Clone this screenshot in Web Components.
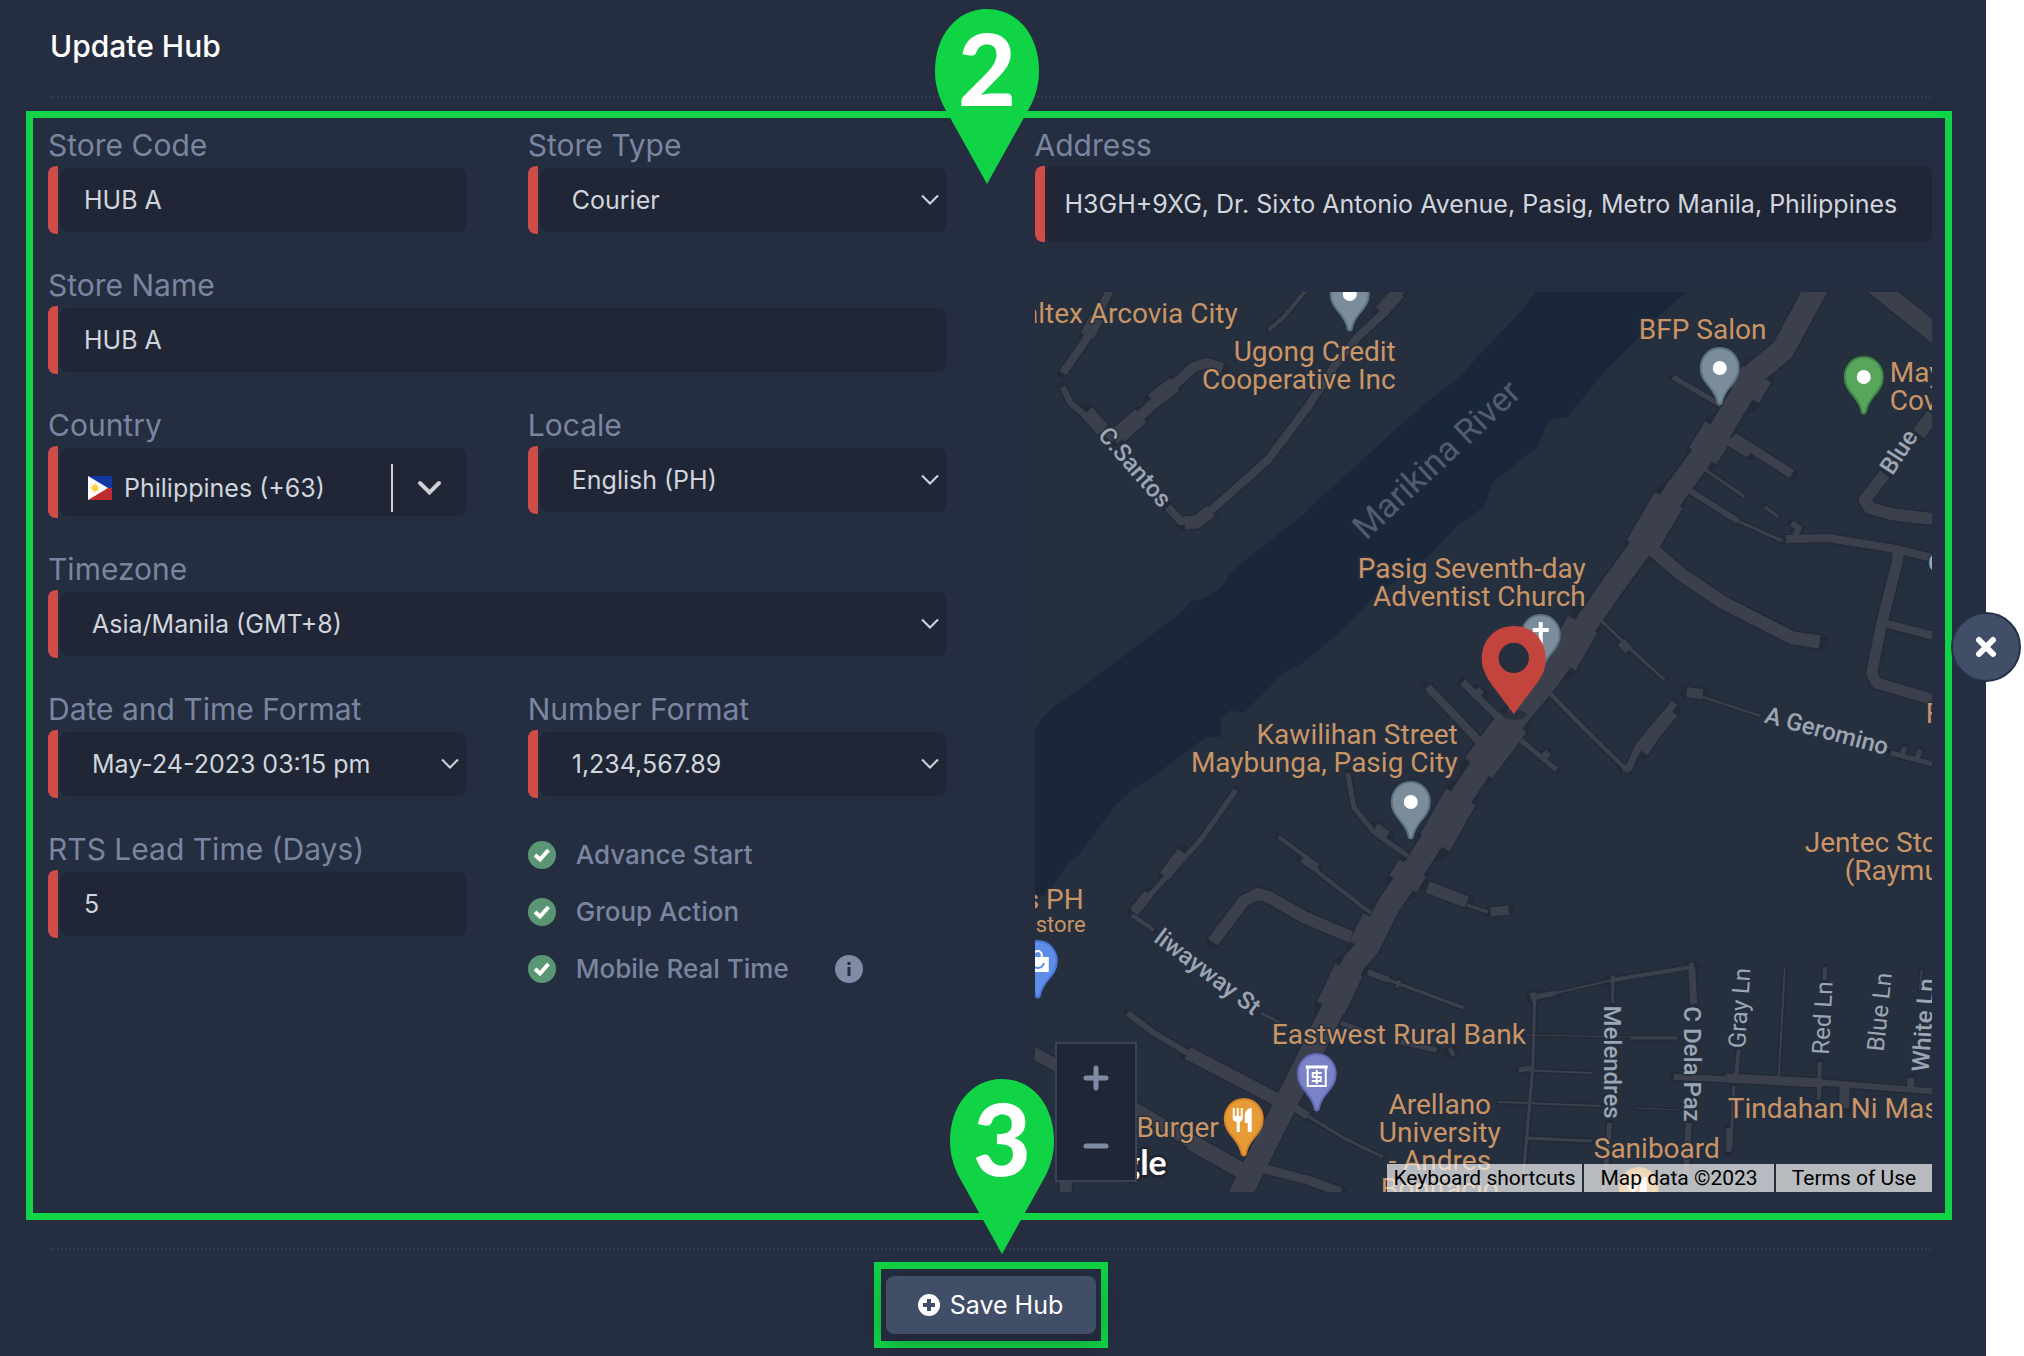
<!DOCTYPE html>
<html lang="en">
<head>
<meta charset="utf-8">
<title>Update Hub</title>
<style>
    :root {
        --panel: #252d40;
        --field: #202635;
        --label: #7a86a0;
        --value: #d0d5de;
        --required: #d04c48;
        --button: #414e67;
        --mark: #10d345;
    }

    body {
        margin: 0;
        background: #fff;
        font-family: Inter, "Open Sans", sans-serif;
        font-size: 25px;
        color: var(--value);
    }
</style>
</head>
<body>
<hub-panel heading="Update Hub">
    <hub-form slot="body">
        <form-field label="Store Code" value="HUB A"></form-field>
        <form-field label="Store Type" kind="select" value="Courier"></form-field>
        <form-field label="Store Name" value="HUB A" wide></form-field>
        <country-field label="Country" value="Philippines (+63)"></country-field>
        <form-field label="Locale" kind="select" value="English (PH)"></form-field>
        <form-field label="Timezone" kind="select" value="Asia/Manila (GMT+8)" wide></form-field>
        <form-field label="Date and Time Format" kind="select" value="May-24-2023 03:15 pm"></form-field>
        <form-field label="Number Format" kind="select" value="1,234,567.89"></form-field>
        <form-field label="RTS Lead Time (Days)" value="5"></form-field>
        <check-list>
            <check-item label="Advance Start"></check-item>
            <check-item label="Group Action"></check-item>
            <check-item label="Mobile Real Time" info></check-item>
        </check-list>
        <form-field slot="location" label="Address" tall
            value="H3GH+9XG, Dr. Sixto Antonio Avenue, Pasig, Metro Manila, Philippines"></form-field>
        <hub-map slot="location"></hub-map>
    </hub-form>
    <save-button slot="actions">Save Hub</save-button>
    <step-pin slot="steps" class="fields">2</step-pin>
    <step-pin slot="steps" class="save">3</step-pin>
</hub-panel>

<script>
class BaseElement extends HTMLElement {
    connectedCallback() {
        if (this.shadowRoot) return;
        this.attachShadow({ mode: 'open' });
        this.shadowRoot.innerHTML = `<style>* { box-sizing: border-box; }</style>` + this.render();
    }

    attr(name) {
        return this.getAttribute(name) || '';
    }
}

class HubPanel extends BaseElement {
    render() {
        return `
            <style>
                :host {
                    display: block;
                    position: relative;
                    box-sizing: border-box;
                    min-height: 100vh;
                    margin-right: 38px;
                    background: var(--panel);
                }
                header {
                    margin: 0 55px 0 50px;
                    padding: 26px 0 30px;
                    border-bottom: 2px dotted #343c50;
                }
                h1 {
                    margin: 0;
                    font-size: 30px;
                    line-height: 40px;
                    font-weight: 500;
                    color: #fff;
                }
                main {
                    margin: 13px 34px 28px 26px;
                    padding: 8px 13px 21px 15px;
                    border: 7px solid var(--mark);
                }
                footer {
                    display: flex;
                    justify-content: center;
                    margin: 0 55px 0 50px;
                    padding: 12px 0 8px;
                    border-top: 2px dotted #343c50;
                }
                .close {
                    position: absolute;
                    top: 612px;
                    right: -35px;
                    display: grid;
                    place-items: center;
                    width: 70px;
                    height: 70px;
                    padding: 0;
                    border: 2px solid #263149;
                    border-radius: 50%;
                    background: var(--button);
                }
                ::slotted(step-pin) { position: absolute; }
                ::slotted(.fields) { top: 9px; left: calc(50% - 58px); }
                ::slotted(.save) { bottom: 102px; left: calc(50% - 43px); }
            </style>
            <header><h1>${this.attr('heading')}</h1></header>
            <main><slot name="body"></slot></main>
            <footer><slot name="actions"></slot></footer>
            <button class="close" type="button" aria-label="Close">
                <svg width="22" height="22" viewBox="0 0 22 22" stroke="#fff" stroke-width="6" stroke-linecap="round">
                    <path d="M4 4 18 18M18 4 4 18"/>
                </svg>
            </button>
            <slot name="steps"></slot>
        `;
    }
}

class HubForm extends BaseElement {
    render() {
        return `
            <style>
                :host {
                    display: grid;
                    grid-template-columns: minmax(0, 1fr) minmax(0, 1fr);
                    column-gap: 89px;
                    align-items: start;
                }
                .fields {
                    display: grid;
                    grid-template-columns: minmax(0, 1fr) minmax(0, 1fr);
                    gap: 32px 62px;
                    align-items: start;
                }
                .location {
                    display: flex;
                    flex-direction: column;
                    gap: 50px;
                }
                ::slotted([wide]) { grid-column: 1 / -1; }
            </style>
            <div class="fields"><slot></slot></div>
            <div class="location"><slot name="location"></slot></div>
        `;
    }
}

const FIELD_STYLE = `
    :host { display: block; }
    label {
        display: block;
        padding-bottom: 2px;
        font-size: 30px;
        line-height: 38px;
        color: var(--label);
        white-space: nowrap;
    }
    .box {
        position: relative;
        display: flex;
        height: 68px;
        padding: 2px 0 2px 12px;
    }
    .box::before {
        content: "";
        position: absolute;
        inset: 0 auto 0 0;
        width: 10px;
        border-radius: 8px 0 0 8px;
        background: var(--required);
    }
    input, select {
        flex: 1;
        min-width: 0;
        margin: 0;
        padding: 0 24px;
        border: 0;
        border-radius: 8px;
        background: var(--field);
        color: var(--value);
        font: inherit;
    }
    select {
        appearance: none;
        padding: 0 32px;
    }
    .arrow {
        position: absolute;
        top: 28px;
        right: 7px;
        pointer-events: none;
    }
`;

class FormField extends BaseElement {
    render() {
        const value = this.attr('value');
        const control = this.attr('kind') === 'select'
            ? `<select id="control"><option>${value}</option></select>
               <svg class="arrow" width="18" height="12" viewBox="0 0 18 12" fill="none" stroke="#d0d5de" stroke-width="2">
                   <path d="M1 1.500 9 9.500 17 1.500"/>
               </svg>`
            : `<input id="control" type="text" value="${value}">`;

        return `
            <style>
                ${FIELD_STYLE}
                :host([tall]) .box { height: 76px; padding: 0 0 0 10px; }
                :host([tall]) input { padding: 0 20px; }
            </style>
            <label for="control">${this.attr('label')}</label>
            <div class="box">${control}</div>
        `;
    }
}

class CountryField extends BaseElement {
    render() {
        return `
            <style>
                ${FIELD_STYLE}
                .box { height: 72px; }
                .picker {
                    flex: 1;
                    display: flex;
                    align-items: center;
                    min-width: 0;
                    padding: 12px 24px 0 28px;
                    border-radius: 8px;
                    background: var(--field);
                }
                select { padding: 0 12px; background: none; }
                .rule {
                    align-self: stretch;
                    width: 2px;
                    margin: 4px 24px 4px 0;
                    background: #d0d0d0;
                }
            </style>
            <label for="control">${this.attr('label')}</label>
            <div class="box">
                <div class="picker">
                    <svg width="24" height="24" viewBox="0 0 24 24">
                        <path fill="#1237a4" d="M0 0h24v12H0z"/>
                        <path fill="#c02b30" d="M0 12h24v12H0z"/>
                        <path fill="#fff" d="M0 0 20 12 0 24z"/>
                        <circle cx="7" cy="12" r="3" fill="#fbd143"/>
                        <path stroke="#fbd143" d="M7 7v10M2 12h10M3.500 8.500l7 7M10.500 8.500l-7 7"/>
                    </svg>
                    <select id="control"><option>${this.attr('value')}</option></select>
                    <span class="rule"></span>
                    <svg width="25" height="16" viewBox="0 0 25 16" fill="none" stroke="#d0d0d0" stroke-width="4" stroke-linecap="round">
                        <path d="M3 3 12.500 12.500 22 3"/>
                    </svg>
                </div>
            </div>
        `;
    }
}

class CheckList extends BaseElement {
    render() {
        return `
            <style>
                :host {
                    display: flex;
                    flex-direction: column;
                    gap: 17px;
                    padding-top: 5px;
                }
            </style>
            <slot></slot>
        `;
    }
}

class CheckItem extends BaseElement {
    render() {
        const info = this.hasAttribute('info') ? `
            <svg class="info" width="28" height="28" viewBox="0 0 28 28" role="img" aria-label="Info">
                <circle cx="14" cy="14" r="14" fill="#808ca5"/>
                <path fill="#252d40" d="M12.500 7h3v3h-3zM12.500 12h3v9h-3z"/>
            </svg>` : '';

        return `
            <style>
                :host { display: flex; align-items: center; gap: 46px; }
                label {
                    position: relative;
                    display: flex;
                    align-items: center;
                    gap: 20px;
                    font-size: 26px;
                    line-height: 40px;
                    color: var(--label);
                    font-weight: 500;
                }
                input {
                    appearance: none;
                    width: 28px;
                    height: 28px;
                    margin: 0;
                    border-radius: 50%;
                    background: #5a9673;
                }
                .tick {
                    position: absolute;
                    left: 5px;
                    pointer-events: none;
                }
            </style>
            <label>
                <input type="checkbox" checked>
                <svg class="tick" width="18" height="18" viewBox="0 0 18 18" fill="none" stroke="#fff" stroke-width="4">
                    <path d="M2 9 7 13.500 15.500 4"/>
                </svg>
                <span>${this.attr('label')}</span>
            </label>
            ${info}
        `;
    }
}

class SaveButton extends BaseElement {
    render() {
        return `
            <style>
                :host {
                    display: block;
                    padding: 7px 5px;
                    border: 7px solid var(--mark);
                }
                button {
                    display: flex;
                    align-items: center;
                    justify-content: center;
                    gap: 10px;
                    width: 210px;
                    height: 58px;
                    border: 0;
                    border-radius: 8px;
                    background: var(--button);
                    box-shadow: 0 6px 24px rgba(20, 24, 36, .4);
                    color: #fff;
                    font: inherit;
                }
            </style>
            <button type="button">
                <svg width="22" height="22" viewBox="0 0 22 22">
                    <circle cx="11" cy="11" r="11" fill="#fff"/>
                    <path stroke="#414e67" stroke-width="4" d="M11 5v12M5 11h12"/>
                </svg>
                <slot></slot>
            </button>
        `;
    }
}

class StepPin extends BaseElement {
    render() {
        return `
            <style>
                :host {
                    display: grid;
                    justify-items: center;
                    width: 104px;
                    height: 175px;
                    font: 900 100px/116px Lato, sans-serif;
                    color: #fff;
                }
                svg, span { grid-area: 1 / 1; }
            </style>
            <svg width="104" height="175" viewBox="0 0 104 175">
                <path fill="#10d345" d="M52 0C21 0 0 27 0 62c0 13 3 23 8 34l44 79 44-79c5-11 8-21 8-34C104 27 83 0 52 0z"/>
            </svg>
            <span><slot></slot></span>
        `;
    }
}

const RIVER = `1535,292 1520,312 1480,353 1463,373 1413,413 1340,480 1320,497 1300,517 1257,550 1233,570
    1220,588 1202,599 1190,601 1180,613 1080,688 1055,705 1040,720 1034,731 1034,900 1047,893 1068,863
    1080,853 1113,807 1133,788 1148,780 1205,737 1220,737 1220,720 1230,710 1243,713 1282,674 1303,662
    1330,640 1373,597 1427,557 1457,525 1483,507 1492,482 1520,460 1536,448 1548,420 1567,417 1591,387
    1608,367 1636,340 1657,317 1685,292`;

// [width, points]
const ROADS = [
    [23, '1820,280 1782,350 1754,373 1720,430 1674,493 1643,543 1614,583 1581,630 1549,677 1508,727 1487,757 1463,793 1440,827 1417,863 1387,907 1367,947 1353,963 1330,1013 1287,1100 1253,1167 1237,1200'],
    [33, '1756,374 1744,395'],
    [32, '1718,430 1702,456'],
    [32, '1668,500 1640,548'],
    [34, '1582,624 1560,662'],
    [34, '1512,722 1478,768'],
    [34, '1460,797 1434,843'],
    [32, '1412,868 1402,884'],
    [30, '1376,920 1362,948'],
    [30, '1348,970 1330,1008'],
    [8, '1110,288 1085,340 1062,373'],
    [14, '1096,318 1086,336'],
    [6, '1062,387 1070,403 1113,440'],
    [14, '1086,412 1102,430'],
    [8, '1167,507 1180,521 1193,522 1213,508 1267,460 1307,407 1333,367 1357,337 1383,313 1402,288'],
    [13, '1184,523 1196,522 1210,511'],
    [14, '1380,312 1398,292'],
    [10, '1113,440 1160,397 1193,367 1206,363 1222,368'],
    [17, '1118,435 1140,416'],
    [16, '1152,401 1174,384'],
    [4, '1307,288 1283,317 1268,330'],
    [19, '1870,282 1940,338'],
    [5, '1672,377 1720,405'],
    [9, '1733,437 1791,474'],
    [13, '1730,440 1750,452'],
    [3, '1702,468 1744,497'],
    [6, '1688,490 1737,521'],
    [3, '1737,521 1782,541'],
    [3, '1764,507 1778,517'],
    [6, '1791,523 1798,528 1792,540'],
    [8, '1785,539 1827,538 1890,548 1940,560'],
    [14, '1932,415 1918,434'],
    [12, '1884,474 1864,500 1869,508 1890,514 1940,520'],
    [11, '1897,550 1897,560 1881,623 1871,673 1876,683 1940,702'],
    [8, '1883,623 1940,638'],
    [13, '1650,548 1680,574 1723,603 1792,638 1819,642'],
    [3, '1600,620 1633,652 1664,680'],
    [9, '1620,642 1628,650'],
    [4, '1548,692 1580,725 1628,772'],
    [7, '1622,768 1628,768 1638,746 1674,703'],
    [12, '1642,752 1652,736 1672,712'],
    [10, '1686,692 1702,694'],
    [2, '1702,697 1760,716'],
    [5, '1520,740 1556,770'],
    [7, '1542,758 1548,752'],
    [5, '1890,753 1940,766'],
    [5, '1901,757 1904,747'],
    [5, '1916,760 1919,750'],
    [8, '1427,687 1480,743'],
    [7, '1462,682 1503,723'],
    [12, '1474,692 1480,696'],
    [5, '1347,773 1353,807 1373,832 1407,856'],
    [11, '1374,828 1386,836'],
    [5, '1235,790 1200,840 1163,880 1137,908'],
    [12, '1182,852 1164,876'],
    [10, '1148,894 1133,912'],
    [4, '1131,915 1153,930'],
    [12, '1212,942 1243,901 1257,894 1268,897 1303,917 1350,937'],
    [4, '1278,837 1312,862 1317,872 1370,913'],
    [9, '1302,858 1316,868'],
    [12, '1427,887 1466,902'],
    [3, '1466,905 1487,912'],
    [9, '1490,912 1508,910'],
    [6, '1127,1013 1153,1033 1187,1053'],
    [13, '1187,1053 1277,1100'],
    [12, '1024,1048 1133,1108 1187,1140 1237,1170'],
    [16, '1190,1142 1240,1170'],
    [6, '1367,972 1388,980'],
    [3, '1388,980 1463,1008'],
    [3, '1396,988 1399,980'],
    [5, '1340,1023 1362,1031'],
    [5, '1400,1042 1436,1050'],
    [9, '1449,1053 1453,1051'],
    [3, '1260,1013 1280,1023'],
    [8, '1290,1105 1307,1116'],
    [3, '1307,1116 1343,1138 1382,1157'],
    [9, '1260,1168 1307,1180 1340,1192'],
    [12, '1065,1180 1065,1200'],
    [5, '1534,997 1555,993'],
    [2, '1555,993 1612,980'],
    [4, '1612,980 1691,967'],
    [9, '1530,998 1536,996'],
    [9, '1610,980 1614,980'],
    [9, '1689,967 1693,967'],
    [3, '1534,997 1532,1067 1526,1137 1521,1192'],
    [3, '1612,980 1612,1003'],
    [5, '1609,1123 1603,1192'],
    [7, '1691,967 1693,1004'],
    [6, '1688,1123 1684,1192'],
    [1, '1525,1035 1678,1038'],
    [3, '1630,1038 1676,1038'],
    [2, '1518,1070 1591,1073'],
    [5, '1518,1070 1530,1068'],
    [2, '1497,1102 1600,1106'],
    [1, '1634,1108 1678,1110'],
    [3, '1525,1138 1591,1141'],
    [6, '1673,1077 1827,1083 1940,1092'],
    [9, '1725,1078 1822,1083'],
    [4, '1738,1050 1735,1078'],
    [3, '1733,1086 1730,1150'],
    [5, '1728,1128 1728,1152'],
    [2, '1784,968 1778,1077'],
    [4, '1824,967 1824,980'],
    [4, '1819,1062 1818,1100'],
    [10, '1844,1087 1843,1108'],
    [2, '1921,970 1919,990'],
    [7, '1910,1078 1910,1090']
];

// [x, baseline, anchor, lines]
const PLACES = [
    [1237, 323, 'end', ['altex Arcovia City']],
    [1395, 361, 'end', ['Ugong Credit', 'Cooperative Inc']],
    [1638, 339, 'start', ['BFP Salon']],
    [1889, 382, 'start', ['May', 'Cov']],
    [1585, 578, 'end', ['Pasig Seventh-day', 'Adventist Church']],
    [1457, 744, 'end', ['Kawilihan Street', 'Maybunga, Pasig City']],
    [1925, 723, 'start', ['F']],
    [1804, 852, 'start', ['Jentec Sto']],
    [1844, 880, 'start', ['(Raymu']],
    [1083, 909, 'end', ['s PH']],
    [1271, 1044, 'start', ['Eastwest Rural Bank']],
    [1218, 1137, 'end', ['Burger']],
    [1439, 1114, 'middle', ['Arellano', 'University', '- Andres', 'Bonifacio']],
    [1593, 1158, 'start', ['Saniboard']],
    [1727, 1118, 'start', ['Tindahan Ni Mas']]
];

// [centre x, centre y, angle, name, class]
const STREETS = [
    [1438, 462, -43, 'Marikina River', 'river'],
    [1134, 467, 49, 'C.Santos', 'street'],
    [1898, 452, -57, 'Blue', 'street'],
    [1935, 563, 0, 'C', 'street'],
    [1826, 731, 15, 'A Geromino', 'street'],
    [1207, 972, 37, 'liwayway St', 'street'],
    [1611, 1062, 90, 'Melendres', 'street'],
    [1691, 1064, 90, 'C Dela Paz', 'street'],
    [1739, 1008, -86, 'Gray Ln', 'lane'],
    [1822, 1018, -87, 'Red Ln', 'lane'],
    [1879, 1012, -84, 'Blue Ln', 'lane'],
    [1923, 1025, -86, 'White Ln', 'street']
];

const DOT = '<circle cy="21" r="7" fill="#fff"/>';
const FORK = '<path fill="#fff" d="M-11 10h2v8h2v-8h2v8h2v-8h2v10c0 2-1 3-3 4v10h-3v-10c-3-1-4-2-4-4zM8 10v24H4v-9H1v-7c0-5 3-8 7-8z"/>';

// [x, top, fill, edge, glyph]
const PINS = [
    [1349, 273, '#7b8d9a', '#5d7382', DOT],
    [1719, 347, '#7b8d9a', '#5d7382', DOT],
    [1863, 356, '#58a55c', '#3f8744', DOT],
    [1410, 781, '#7b8d9a', '#5d7382', DOT],
    [1540, 614, '#7b8d9a', '#5d7382', '<path stroke="#fff" stroke-width="4" d="M0 8v24M-8 16H8"/>'],
    [1037, 940, '#5e8eea', '#4a78d8', `
        <path fill="#fff" d="M-11 17h22v15h-22z"/>
        <path fill="none" stroke="#fff" stroke-width="2" d="M-4 18v-3a4 4 0 0 1 8 0v3"/>
        <path fill="none" stroke="#5e8eea" stroke-width="2" d="M-6 23a6 5 0 0 0 12 0"/>`],
    [1316, 1053, '#7b83c7', '#6068b4', `
        <path fill="none" stroke="#fff" stroke-width="2" d="M-9 14v19H9V14"/>
        <path stroke="#fff" stroke-width="3" d="M-11 14h22"/>
        <path fill="none" stroke="#fff" stroke-width="2" d="M5 20h-9v4h8v4h-9M0 17v14"/>`],
    [1243, 1098, '#e59b36', '#d8822a', FORK],
    [1638, 1167, '#e59b36', '#d8822a', FORK]
];

class HubMap extends BaseElement {
    render() {
        const roads = cls => ROADS.map(([w, points]) =>
            `<polyline class="${cls}" stroke-width="${cls === 'edge' ? w + 3 : w}" points="${points}"/>`).join('');
        const places = PLACES.map(([x, y, anchor, lines]) => {
            const spans = lines.map((line, i) => `<tspan x="${x}" y="${y + i * 28}">${line}</tspan>`).join('');
            return `<text class="place" text-anchor="${anchor}">${spans}</text>`;
        }).join('');
        const streets = STREETS.map(([x, y, angle, name, cls]) =>
            `<text class="${cls}" dy="8" text-anchor="middle" transform="translate(${x} ${y}) rotate(${angle})">${name}</text>`).join('');
        const pins = PINS.map(([x, y, fill, edge, glyph]) => `
            <g transform="translate(${x} ${y})">
                <path fill="${fill}" stroke="${edge}" stroke-width="2"
                    d="M0 1C-11 1-19 10-19 21c0 8 4 13 9 19 4 5 7 9 8 16 1 2 3 2 4 0 1-7 4-11 8-16 5-6 9-11 9-19C19 10 11 1 0 1z"/>
                ${glyph}
            </g>`).join('');

        return `
            <style>
                :host {
                    display: block;
                    position: relative;
                    height: 900px;
                    overflow: hidden;
                    background: #262f3d;
                    font-family: Roboto, sans-serif;
                }
                .canvas { display: block; width: 100%; height: 100%; }
                polyline { fill: none; stroke-linejoin: round; }
                .edge { stroke: #222a37; stroke-linecap: round; }
                .road { stroke: #3b404c; stroke-linecap: butt; }
                text {
                    paint-order: stroke;
                    stroke: #262f3d;
                    stroke-width: 3px;
                    stroke-linejoin: round;
                }
                .place { font-size: 28px; fill: #c99567; }
                .small { font-size: 22px; }
                .street { font-size: 24px; font-weight: 500; fill: #9ca5b3; }
                .lane { font-size: 24px; fill: #9ca5b3; }
                .river { font-size: 34px; fill: #515c6d; stroke: none; }
                .logo { font: 700 34px Lato, sans-serif; fill: #fff; stroke: #20242e; stroke-width: 5px; }
                .zoom {
                    position: absolute;
                    left: 20px;
                    bottom: 10px;
                    display: grid;
                    width: 82px;
                    height: 140px;
                    border: 2px solid #374359;
                    background: var(--field);
                }
                .zoom button {
                    display: grid;
                    place-items: center;
                    padding: 0;
                    border: 0;
                    background: none;
                }
                .legal {
                    position: absolute;
                    right: 0;
                    bottom: 0;
                    display: grid;
                    grid-template-columns: 195px 190px 156px;
                    gap: 2px;
                    font-size: 21px;
                    line-height: 28px;
                    text-align: center;
                }
                .legal > * {
                    padding: 0;
                    border: 0;
                    background: rgba(245, 245, 245, .7);
                    color: #000;
                    font: inherit;
                    text-decoration: none;
                    white-space: nowrap;
                }
            </style>
            <svg class="canvas" viewBox="1034 292 898 900" preserveAspectRatio="xMidYMid slice" role="img" aria-label="Map">
                <polygon fill="#1a263a" points="${RIVER}"/>
                ${roads('edge')}
                ${roads('road')}
                ${streets}
                ${places}
                <text class="place small" x="1035" y="932">store</text>
                ${pins}
                <ellipse cx="1514" cy="715" rx="12" ry="5" fill="#1c222c" opacity=".5"/>
                <path fill="#c2443d" fill-rule="evenodd"
                    d="M1513 626c-19 0-32 14-32 33 0 9 4 16 8 23l24 32 24-32c5-7 8-14 8-23 0-19-13-33-32-33zm0 17a15 15 0 1 1 0 30 15 15 0 0 1 0-30z"/>
                <circle cx="1513" cy="658" r="15" fill="#262f3d"/>
                <text class="logo" x="1166" y="1175" text-anchor="end">Google</text>
            </svg>
            <div class="zoom">
                <button type="button" aria-label="Zoom in">
                    <svg width="26" height="26" viewBox="0 0 26 26" stroke="#7f8aa3" stroke-width="5" stroke-linecap="round">
                        <path d="M3 13h20M13 3v20"/>
                    </svg>
                </button>
                <button type="button" aria-label="Zoom out">
                    <svg width="26" height="26" viewBox="0 0 26 26" stroke="#7f8aa3" stroke-width="5" stroke-linecap="round">
                        <path d="M3 13h20"/>
                    </svg>
                </button>
            </div>
            <div class="legal">
                <button type="button">Keyboard shortcuts</button>
                <span>Map data ©2023</span>
                <a href="#terms">Terms of Use</a>
            </div>
        `;
    }
}

// Register the custom elements
customElements.define('hub-panel', HubPanel);
customElements.define('hub-form', HubForm);
customElements.define('form-field', FormField);
customElements.define('country-field', CountryField);
customElements.define('check-list', CheckList);
customElements.define('check-item', CheckItem);
customElements.define('save-button', SaveButton);
customElements.define('step-pin', StepPin);
customElements.define('hub-map', HubMap);
</script>
</body>
</html>
